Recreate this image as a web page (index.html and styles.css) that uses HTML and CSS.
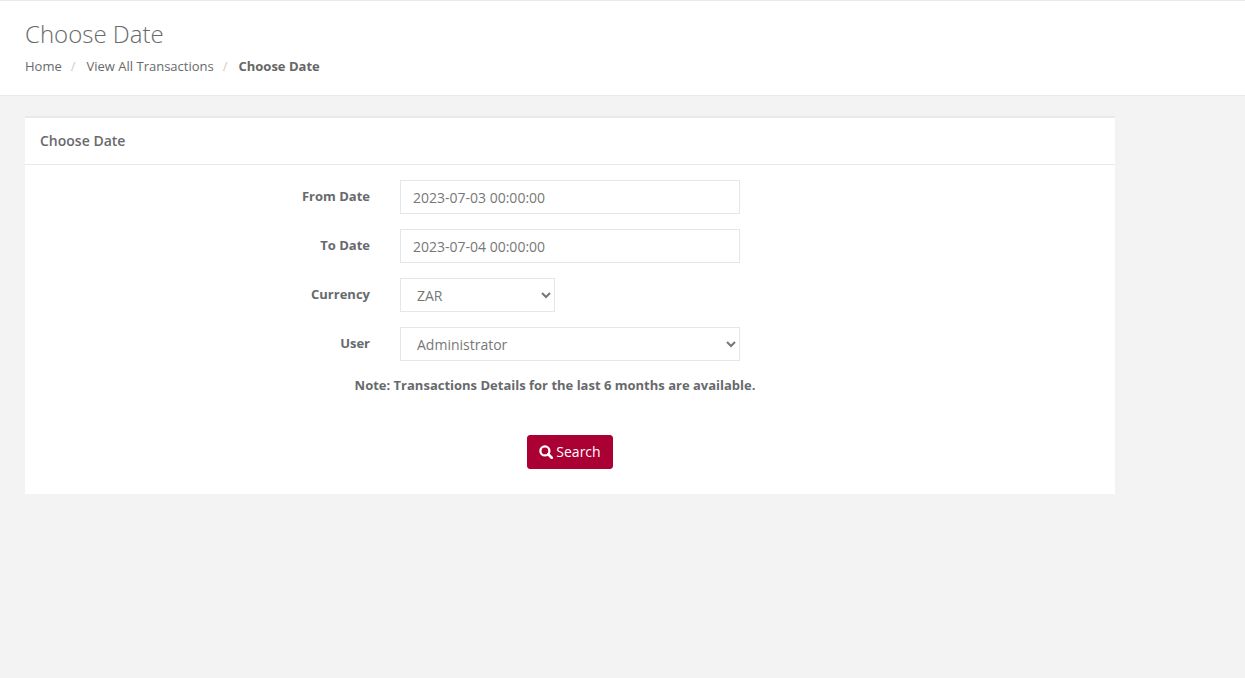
FILE: index.html
```html
<!DOCTYPE html>
<html lang="en">
<head>
<meta charset="utf-8">
<title>Choose Date</title>
<link rel="stylesheet" href="styles.css">
</head>
<body>
<header class="page-header">
  <h1 class="page-title">Choose Date</h1>
  <ol class="breadcrumb">
    <li><a href="#">Home</a></li>
    <li class="sep">/</li>
    <li><a href="#">View All Transactions</a></li>
    <li class="sep">/</li>
    <li class="current">Choose Date</li>
  </ol>
</header>
<main class="content">
  <section class="panel">
    <h2 class="panel-heading">Choose Date</h2>
    <form class="panel-body">
      <div class="form-row">
        <label class="form-label" for="from">From Date</label>
        <input class="form-control" id="from" type="text" value="2023-07-03 00:00:00">
      </div>
      <div class="form-row">
        <label class="form-label" for="to">To Date</label>
        <input class="form-control" id="to" type="text" value="2023-07-04 00:00:00">
      </div>
      <div class="form-row">
        <label class="form-label" for="currency">Currency</label>
        <select class="form-control select-small" id="currency"><option>ZAR</option></select>
      </div>
      <div class="form-row">
        <label class="form-label" for="user">User</label>
        <select class="form-control" id="user"><option>Administrator</option></select>
      </div>
      <p class="note">Note: Transactions Details for the last 6 months are available.</p>
      <div class="actions">
        <button class="btn" type="button">
          <svg class="icon" viewBox="0 0 14 14" width="14" height="14" aria-hidden="true"><circle cx="5.9" cy="5.9" r="4.5" fill="none" stroke="currentColor" stroke-width="2.3"/><path d="M9.3 9.3 12.7 12.7" fill="none" stroke="currentColor" stroke-width="2.7" stroke-linecap="round"/></svg>
          Search
        </button>
      </div>
    </form>
  </section>
</main>
</body>
</html>
```
FILE: styles.css
```css
* { box-sizing: border-box; }
html, body { height: 100%; }
body {
  margin: 0;
  background: #f3f3f4;
  color: #676a6c;
  font-family: "Open Sans", "Liberation Sans", sans-serif;
  font-size: 13px;
}
.page-header {
  height: 96px;
  padding: 19px 25px 0;
  background: #fff;
  border-top: 1px solid #e7eaec;
  border-bottom: 1px solid #e7eaec;
}
.page-title {
  margin: 0;
  font-size: 24px;
  font-weight: 300;
  line-height: 27px;
  color: #676a6c;
}
.breadcrumb {
  display: flex;
  gap: 9px;
  margin: 10px 0 0;
  padding: 0;
  list-style: none;
  font-size: 13px;
  line-height: 18px;
}
.breadcrumb a { color: #676a6c; text-decoration: none; }
.breadcrumb .sep { color: #ccc; margin-right: 2px; }
.breadcrumb .current { font-weight: 700; color: #666; }
.content { padding: 20px 25px 0; }
.panel {
  width: 1090px;
  background: #fff;
  border-top: 2px solid #e7eaec;
}
.panel-heading {
  margin: 0;
  height: 47px;
  padding: 13px 15px 0;
  font-size: 14px;
  font-weight: 600;
  line-height: 20px;
  color: #676a6c;
  border-bottom: 1px solid #e7eaec;
}
.panel-body { padding: 15px 0 25px; }
.form-row {
  display: flex;
  align-items: flex-start;
  gap: 30px;
  margin-bottom: 15px;
}
.form-label {
  width: 345px;
  padding-top: 7px;
  text-align: right;
  font-size: 13px;
  font-weight: 700;
  line-height: 18px;
  color: #676a6c;
}
.form-control {
  width: 340px;
  height: 34px;
  padding: 6px 12px;
  background: #fff;
  border: 1px solid #e5e6e7;
  border-radius: 0;
  color: #777;
  font-family: inherit;
  font-size: 14px;
}
.select-small { width: 155px; }
.note {
  margin: 0;
  width: 1060px;
  text-align: center;
  font-size: 13px;
  font-weight: 700;
  line-height: 18px;
  color: #676a6c;
}
.actions {
  display: flex;
  justify-content: center;
  width: 1090px;
  margin-top: 41px;
}
.btn {
  display: flex;
  align-items: center;
  gap: 3px;
  height: 34px;
  padding: 0 11px 2px;
  background: #ab0033;
  border: 1px solid #ab0033;
  border-radius: 3px;
  color: #fff;
  font-family: inherit;
  font-size: 14px;
}
.icon { flex: none; margin-top: 2px; }
```
